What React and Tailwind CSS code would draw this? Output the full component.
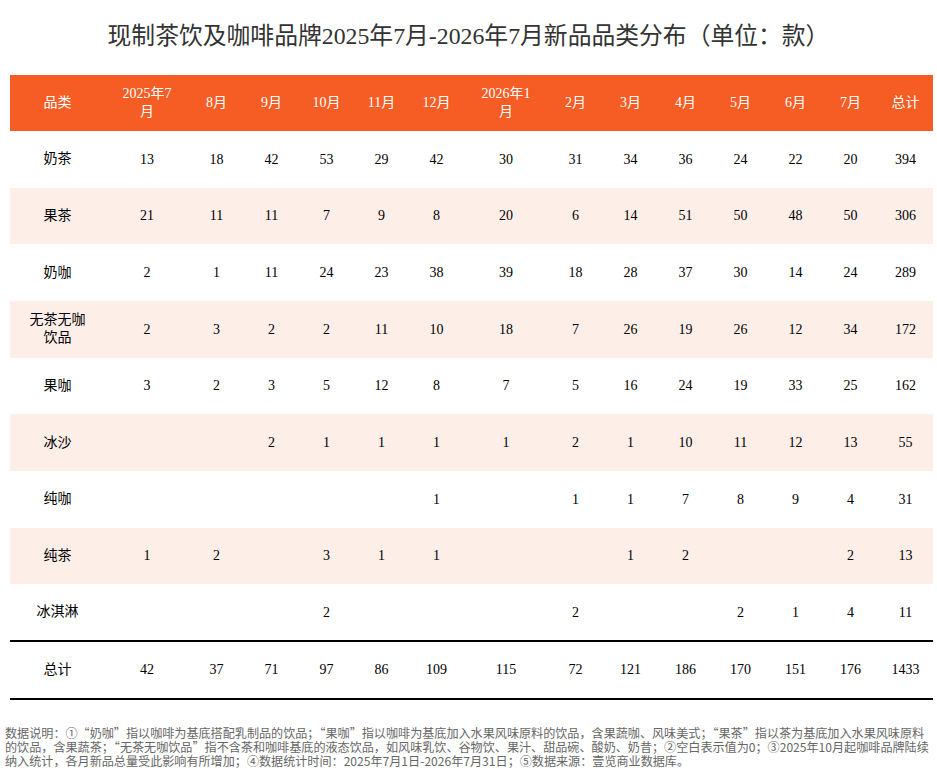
const months = ["8月", "9月", "10月", "11月", "12月"];
const months2 = ["2月", "3月", "4月", "5月", "6月", "7月"];

const rows = [
  { name: "奶茶", v: [13, 18, 42, 53, 29, 42, 30, 31, 34, 36, 24, 22, 20, 394] },
  { name: "果茶", v: [21, 11, 11, 7, 9, 8, 20, 6, 14, 51, 50, 48, 50, 306] },
  { name: "奶咖", v: [2, 1, 11, 24, 23, 38, 39, 18, 28, 37, 30, 14, 24, 289] },
  { name: ["无茶无咖", "饮品"], v: [2, 3, 2, 2, 11, 10, 18, 7, 26, 19, 26, 12, 34, 172] },
  { name: "果咖", v: [3, 2, 3, 5, 12, 8, 7, 5, 16, 24, 19, 33, 25, 162] },
  { name: "冰沙", v: ["", "", 2, 1, 1, 1, 1, 2, 1, 10, 11, 12, 13, 55] },
  { name: "纯咖", v: ["", "", "", "", "", 1, "", 1, 1, 7, 8, 9, 4, 31] },
  { name: "纯茶", v: [1, 2, "", 3, 1, 1, "", "", 1, 2, "", "", 2, 13] },
  { name: "冰淇淋", v: ["", "", "", 2, "", "", "", 2, "", "", 2, 1, 4, 11] },
];

const totals = [42, 37, 71, 97, 86, 109, 115, 72, 121, 186, 170, 151, 176, 1433];

function HeadCell({ children }) {
  return <th className="font-normal text-white text-center leading-[18px]">{children}</th>;
}

export default function App() {
  return (
    <div className="w-[937px] h-[777px] bg-white font-['Liberation_Serif','Noto_Sans_CJK_SC',serif] text-[14px] text-black overflow-hidden">
      <h1 className="pt-[20px] h-[75px] text-center text-[23.8px] leading-[32px] text-[#333]">
        现制茶饮及咖啡品牌2025年7月-2026年7月新品品类分布（单位：款）
      </h1>
      <div className="px-[10px]">
        <table className="w-[923px] table-fixed border-collapse">
          <colgroup>
            <col className="w-[95px]" />
            <col className="w-[84px]" />
            {months.map((m) => (
              <col key={m} className="w-[55px]" />
            ))}
            <col className="w-[84px]" />
            {months2.map((m) => (
              <col key={m} className="w-[55px]" />
            ))}
            <col className="w-[55px]" />
          </colgroup>
          <thead>
            <tr className="h-[56px] bg-[#f65d24]">
              <HeadCell>品类</HeadCell>
              <HeadCell>
                2025年7<br />月
              </HeadCell>
              {months.map((m) => (
                <HeadCell key={m}>{m}</HeadCell>
              ))}
              <HeadCell>
                2026年1<br />月
              </HeadCell>
              {months2.map((m) => (
                <HeadCell key={m}>{m}</HeadCell>
              ))}
              <HeadCell>总计</HeadCell>
            </tr>
          </thead>
          <tbody>
            {rows.map((r, i) => (
              <tr key={i} className={i % 2 === 1 ? "h-[56.67px] bg-[#fdeee8]" : "h-[56.67px]"}>
                <td className="text-center leading-[18px]">
                  {Array.isArray(r.name) ? (
                    <>
                      {r.name[0]}
                      <br />
                      {r.name[1]}
                    </>
                  ) : (
                    r.name
                  )}
                </td>
                {r.v.map((n, j) => (
                  <td key={j} className="text-center">
                    {n}
                  </td>
                ))}
              </tr>
            ))}
            <tr className="h-[58px] border-y-2 border-black">
              <td className="text-center">总计</td>
              {totals.map((n, j) => (
                <td key={j} className="text-center">
                  {n}
                </td>
              ))}
            </tr>
          </tbody>
        </table>
      </div>
      <div className="mt-[26px] pl-[5px] font-['Noto_Sans_CJK_SC',sans-serif] text-[12.1px] leading-[14px] text-[#666] whitespace-nowrap">
        <p>数据说明：①“奶咖”指以咖啡为基底搭配乳制品的饮品；“果咖”指以咖啡为基底加入水果风味原料的饮品，含果蔬咖、风味美式；“果茶”指以茶为基底加入水果风味原料</p>
        <p>的饮品，含果蔬茶；“无茶无咖饮品”指不含茶和咖啡基底的液态饮品，如风味乳饮、谷物饮、果汁、甜品碗、酸奶、奶昔；②空白表示值为0；③2025年10月起咖啡品牌陆续</p>
        <p>纳入统计，各月新品总量受此影响有所增加；④数据统计时间：2025年7月1日-2026年7月31日；⑤数据来源：壹览商业数据库。</p>
      </div>
    </div>
  );
}
